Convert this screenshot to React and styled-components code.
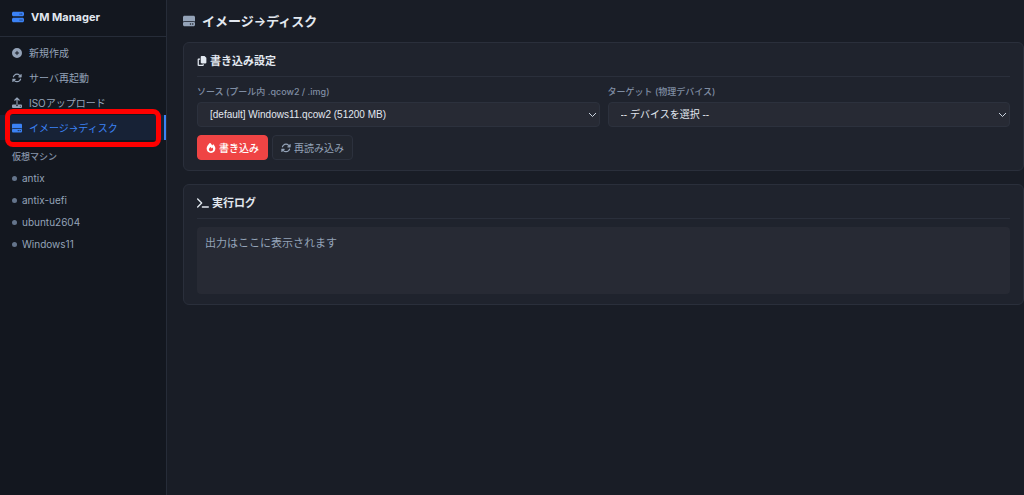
import React from "react";
import styled, { createGlobalStyle, css } from "styled-components";
import {
  FaServer,
  FaCirclePlus,
  FaArrowsRotate,
  FaHardDrive,
  FaCopy,
  FaTerminal,
} from "react-icons/fa6";

const GlobalStyle = createGlobalStyle`
  *, *::before, *::after { box-sizing: border-box; }
  body {
    margin: 0;
    background: #191d26;
    color: #e2e8f0;
    font-family: Inter, "Noto Sans CJK JP", sans-serif;
    font-size: 10px;
    line-height: 16px;
  }
  h1, h2, p, ul { margin: 0; padding: 0; }
  button, select, textarea { font: inherit; margin: 0; }
  svg { display: block; flex: none; }
`;

const Shell = styled.div`
  display: grid;
  grid-template-columns: 167px minmax(0, 1fr);
  min-height: 100vh;
`;

const Sidebar = styled.aside`
  background: #13171f;
  border-right: 1px solid #262c38;
`;

const Brand = styled.div`
  display: flex;
  align-items: center;
  gap: 7px;
  height: 37px;
  padding: 0 12px 2px;
  border-bottom: 1px solid #262c38;
  font-size: 11px;
  font-weight: 700;
  svg { color: #3b82f6; }
`;

const Nav = styled.nav`
  padding-top: 3px;
`;

const NavLink = styled.a`
  display: flex;
  align-items: center;
  gap: 7px;
  height: 25px;
  padding: 0 12px;
  border-right: 2px solid transparent;
  color: #94a3b8;
  text-decoration: none;
  ${(p) => p.$active && css`
    background: #172236;
    border-right-color: #3b82f6;
    color: #3b82f6;
  `}
`;

const Highlighted = styled.div`
  position: relative;
  &::after {
    content: "";
    position: absolute;
    inset: -6px 5px -7px 5px;
    border: 5px solid #ff0000;
    border-radius: 8px;
    pointer-events: none;
  }
`;

const GroupTitle = styled.h2`
  padding: 9px 12px 0;
  color: #8593a8;
  font-size: 9px;
  font-weight: 500;
`;

const VmList = styled.ul`
  padding-top: 2px;
  list-style: none;
`;

const VmLink = styled.a`
  display: flex;
  align-items: center;
  gap: 5px;
  height: 22px;
  padding: 0 12px;
  color: #94a3b8;
  text-decoration: none;
  &::before {
    content: "";
    width: 5px;
    height: 5px;
    border-radius: 50%;
    background: #64748b;
  }
`;

const Main = styled.main`
  display: flex;
  flex-direction: column;
  gap: 13px;
  padding: 12px 0 0 16px;
`;

const PageTitle = styled.h1`
  display: flex;
  align-items: center;
  gap: 7px;
  height: 17px;
  font-size: 13px;
  font-weight: 600;
  svg { color: #94a3b8; }
`;

const Card = styled.section`
  padding: 10px 13px;
  border: 1px solid #2a2f3b;
  border-radius: 6px;
  background: #1f232d;
`;

const CardTitle = styled.h2`
  display: flex;
  align-items: center;
  gap: 3px;
  height: 24px;
  padding-bottom: 8px;
  border-bottom: 1px solid #2a2f3b;
  font-size: 11px;
  font-weight: 600;
`;

const Fields = styled.div`
  display: grid;
  grid-template-columns: 1fr 1fr;
  gap: 8px;
  padding-top: 7px;
`;

const Field = styled.div`
  display: flex;
  flex-direction: column;
  gap: 2px;
`;

const Label = styled.label`
  color: #7f8da3;
  font-size: 9px;
  font-weight: 500;
`;

const SelectWrap = styled.div`
  position: relative;
  svg {
    position: absolute;
    right: 3px;
    top: 9px;
    pointer-events: none;
  }
`;

const Select = styled.select`
  display: block;
  width: 100%;
  height: 25px;
  padding: 0 12px;
  appearance: none;
  border: 1px solid #2c313d;
  border-radius: 4px;
  background: #272a34;
  color: #e2e8f0;
  && { font-family: "Liberation Sans", "Noto Sans CJK JP", sans-serif; }
`;

const Actions = styled.div`
  display: flex;
  gap: 4px;
  padding-top: 8px;
`;

const Button = styled.button`
  display: flex;
  align-items: center;
  gap: 3px;
  height: 25px;
  padding: 0 8px;
  border: 1px solid ${(p) => (p.$danger ? "#ef4444" : "#2c313d")};
  border-radius: 4px;
  background: ${(p) => (p.$danger ? "#ef4444" : "#22262f")};
  color: ${(p) => (p.$danger ? "#ffffff" : "#94a3b8")};
  font-weight: ${(p) => (p.$danger ? 500 : 400)};
`;

const Log = styled.textarea`
  display: block;
  width: 100%;
  height: 67px;
  margin-top: 8px;
  padding: 8px;
  border: 0;
  border-radius: 4px;
  background: #272a34;
  resize: none;
  outline: 0;
  &::placeholder { color: #94a3b8; opacity: 1; }
  && { font-size: 11px; }
`;

const UploadIcon = () => (
  <svg width="10" height="11" viewBox="0 0 20 22" aria-hidden="true">
    <path d="M10 16V2M5.500 6.500L10 2L14.500 6.500" fill="none" stroke="currentColor" strokeWidth="2.2" strokeLinecap="round" strokeLinejoin="round" />
    <path fill="currentColor" fillRule="evenodd" d="M2 15h6v1.500a2 2 0 0 0 4 0V15h6a2 2 0 0 1 2 2v3a2 2 0 0 1-2 2H2a2 2 0 0 1-2-2v-3a2 2 0 0 1 2-2Zm14.500 2.500a1 1 0 1 0 .01 0Z" />
  </svg>
);

const BurnIcon = () => (
  <svg width="10" height="10" viewBox="0 0 448 512" aria-hidden="true">
    <path fill="currentColor" fillRule="evenodd" d="M160 4c8-6 18-5 26 2 38 36 72 74 100 116 12-16 26-33 41-47 8-7 18-7 26 0 38 37 95 127 95 209 0 125-98 228-224 228C97 512 0 409 0 284 0 192 85 77 160 4Zm66 414c64 0 108-42 108-100 0-34-16-60-34-82l-38 44c-16-26-40-56-60-76-38 42-88 84-88 124 0 56 48 90 112 90Z" />
  </svg>
);

const Chevron = () => (
  <svg width="9" height="8" viewBox="0 0 9 8" aria-hidden="true">
    <path d="M1 2L4.500 5.500L8 2" fill="none" stroke="#cbd5e1" strokeWidth="1" />
  </svg>
);

const vms = ["antix", "antix-uefi", "ubuntu2604", "Windows11"];

export default function App() {
  return (
    <>
      <GlobalStyle />
      <Shell>
        <Sidebar>
          <Brand><FaServer size={12} />VM Manager</Brand>
          <Nav>
            <NavLink href="#new"><FaCirclePlus size={10} />新規作成</NavLink>
            <NavLink href="#restart"><FaArrowsRotate size={10} />サーバ再起動</NavLink>
            <NavLink href="#upload"><UploadIcon />ISOアップロード</NavLink>
            <Highlighted>
              <NavLink href="#disk" $active aria-current="page"><FaHardDrive size={10} />イメージ→ディスク</NavLink>
            </Highlighted>
          </Nav>
          <GroupTitle>仮想マシン</GroupTitle>
          <VmList>
            {vms.map((name) => (
              <li key={name}><VmLink href={`#${name}`}>{name}</VmLink></li>
            ))}
          </VmList>
        </Sidebar>
        <Main>
          <PageTitle><FaHardDrive size={12} />イメージ→ディスク</PageTitle>
          <Card>
            <CardTitle><FaCopy size={10} />書き込み設定</CardTitle>
            <Fields>
              <Field>
                <Label htmlFor="source">ソース (プール内 .qcow2 / .img)</Label>
                <SelectWrap>
                  <Select id="source"><option>[default] Windows11.qcow2 (51200 MB)</option></Select>
                  <Chevron />
                </SelectWrap>
              </Field>
              <Field>
                <Label htmlFor="target">ターゲット (物理デバイス)</Label>
                <SelectWrap>
                  <Select id="target"><option>-- デバイスを選択 --</option></Select>
                  <Chevron />
                </SelectWrap>
              </Field>
            </Fields>
            <Actions>
              <Button type="button" $danger><BurnIcon />書き込み</Button>
              <Button type="button"><FaArrowsRotate size={10} />再読み込み</Button>
            </Actions>
          </Card>
          <Card>
            <CardTitle><FaTerminal size={12} />実行ログ</CardTitle>
            <Log readOnly aria-label="実行ログ" placeholder="出力はここに表示されます" />
          </Card>
        </Main>
      </Shell>
    </>
  );
}
